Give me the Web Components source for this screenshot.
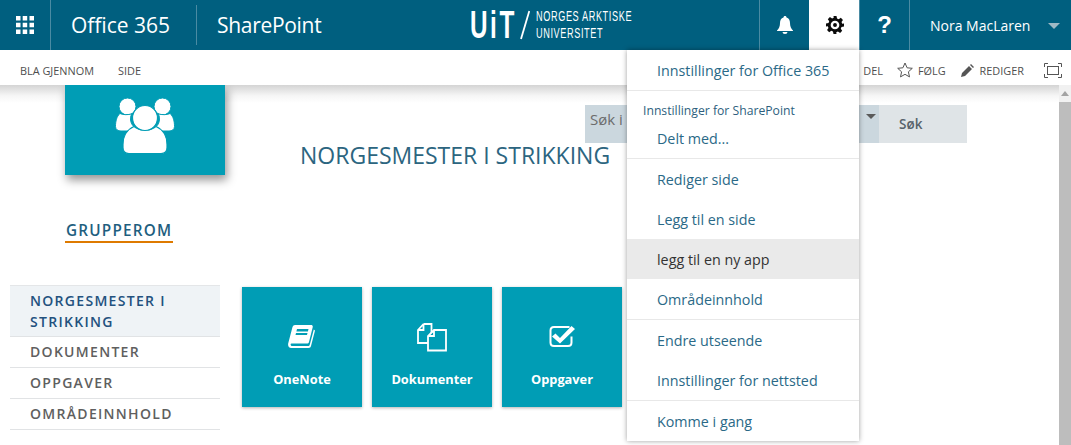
<!DOCTYPE html>
<html lang="nb">
<head>
<meta charset="utf-8">
<title>Norgesmester i strikking</title>
<style>
  html, body { margin: 0; height: 100%; overflow: hidden; background: #fff; }
  body { font-family: "Open Sans", "Noto Sans", sans-serif; }
</style>
</head>
<body>
<sp-app>
  <sp-topbar slot="top"></sp-topbar>
  <sp-ribbon slot="top"></sp-ribbon>
  <sp-hero></sp-hero>
  <sp-content>
    <sp-nav slot="nav">
      <sp-nav-item active>NORGESMESTER I STRIKKING</sp-nav-item>
      <sp-nav-item>DOKUMENTER</sp-nav-item>
      <sp-nav-item>OPPGAVER</sp-nav-item>
      <sp-nav-item>OMRÅDEINNHOLD</sp-nav-item>
    </sp-nav>
    <sp-tile icon="book">OneNote</sp-tile>
    <sp-tile icon="docs">Dokumenter</sp-tile>
    <sp-tile icon="check">Oppgaver</sp-tile>
  </sp-content>
  <sp-menu slot="overlay">
    <sp-menu-item sep>Innstillinger for Office 365</sp-menu-item>
    <sp-menu-head>Innstillinger for SharePoint</sp-menu-head>
    <sp-menu-item sep short>Delt med...</sp-menu-item>
    <sp-menu-item>Rediger side</sp-menu-item>
    <sp-menu-item>Legg til en side</sp-menu-item>
    <sp-menu-item hover>legg til en ny app</sp-menu-item>
    <sp-menu-item sep>Områdeinnhold</sp-menu-item>
    <sp-menu-item>Endre utseende</sp-menu-item>
    <sp-menu-item sep>Innstillinger for nettsted</sp-menu-item>
    <sp-menu-item>Komme i gang</sp-menu-item>
  </sp-menu>
</sp-app>

<script>
// small helper, every element is just a shadow root with html
const define = (name, html) => {
  customElements.define(name, class extends HTMLElement {
    constructor() {
      super();
      this.attachShadow({ mode: 'open' });
      const template = document.createElement('template');
      template.innerHTML = typeof html === 'function' ? html(this) : html;
      this.shadowRoot.appendChild(template.content.cloneNode(true));
    }
  });
};

define('sp-app', `
  <style>
    :host { display: block; position: relative; width: 1071px; height: 445px; overflow: hidden; }
    .top { position: relative; z-index: 2; }
    .below { display: flex; height: 360px; }
    .page { flex: 1; min-width: 0; position: relative; }
    .track { width: 12px; background: #f1f1f1; display: flex; flex-direction: column; }
    .arrow { height: 17px; display: flex; align-items: center; justify-content: center; }
    .arrow i { border: 4px solid transparent; border-top: 0; border-bottom: 5px solid #a3a3a3; }
    .thumb { flex: 1; background: #bdbdbd; }
    .shade { position: absolute; left: 0; right: 12px; top: 85px; height: 18px; background: linear-gradient(#d4d4d4, #f6f6f6 60%, rgba(255,255,255,0)); z-index: 1; }
  </style>
  <div class="top"><slot name="top"></slot></div>
  <div class="shade"></div>
  <div class="below">
    <div class="page"><slot></slot></div>
    <div class="track"><div class="arrow"><i></i></div><div class="thumb"></div></div>
  </div>
  <slot name="overlay"></slot>
`);

define('sp-topbar', `
  <style>
    :host { display: flex; height: 50px; background: #005f7f; color: #fff; font-family: "Open Sans", "Noto Sans", sans-serif; align-items: stretch; }
    .waffle { width: 50px; border-right: 1px solid #4a8ba3; display: flex; align-items: center; justify-content: center; }
    .brand { display: flex; align-items: center; font-size: 21px; padding-left: 20px; }
    .brand span { line-height: 40px; white-space: nowrap; }
    .brand .o365 { width: 104px; border-right: 1px solid #4a8ba3; padding-right: 21px; }
    .brand .sp { padding-left: 20px; letter-spacing: -.3px; }
    .logo { position: absolute; left: 470px; top: 0; height: 50px; display: flex; align-items: center; }
    .spacer { flex: 1; }
    .cell { width: 49px; border-left: 1px solid #4a8ba3; display: flex; align-items: center; justify-content: center; }
    .cell.on { background: #fff; border-left: 1px solid #fff; }
    .user { width: 162px; border-left: 1px solid #4a8ba3; display: flex; align-items: center; font-size: 14px; padding-left: 20px; box-sizing: border-box; white-space: nowrap; }
    .user i { margin-left: 18px; margin-top: 1px; border: 6px solid transparent; border-bottom: 0; border-top: 6px solid #9fb9c5; }
    .q { font: bold 24px "Liberation Sans", sans-serif; }
    .uit { font: bold 38px/1 "Liberation Sans", sans-serif; letter-spacing: 4px; width: 50px; white-space: nowrap; transform: scaleX(.64); transform-origin: left center; }
    .slash { width: 10px; height: 30px; margin-right: 6px; }
    .two { font: 15px/17px "Liberation Sans", sans-serif; letter-spacing: 1px; width: 96px; white-space: nowrap; padding-bottom: 2px; }
    .two div { transform: scaleX(.61); transform-origin: left center; }
  </style>
  <div class="waffle">
    <svg width="18" height="18" viewBox="0 0 18 18" fill="#fff"><path d="M0 0h4.500v4.500H0zM6.700 0h4.500v4.500H6.700zM13.500 0H18v4.500h-4.500zM0 6.700h4.500v4.500H0zM6.700 6.700h4.500v4.500H6.700zM13.500 6.700H18v4.500h-4.500zM0 13.500h4.500V18H0zM6.700 13.500h4.500V18H6.700zM13.500 13.500H18V18h-4.500z"/></svg>
  </div>
  <div class="brand"><span class="o365">Office 365</span><span class="sp">SharePoint</span></div>
  <div class="logo">
    <div class="uit">UiT</div>
    <svg class="slash" viewBox="0 0 10 30"><path d="M9.300 1 L1 29" stroke="#fff" stroke-width="1.800" fill="none"/></svg>
    <div class="two"><div>NORGES ARKTISKE</div><div>UNIVERSITET</div></div>
  </div>
  <div class="spacer"></div>
  <div class="cell">
    <svg width="16" height="18" viewBox="0 0 16 18" fill="#fff"><path d="M8 0c1 0 1.500.7 1.500 1.500C12 2.200 13 4.500 13 7c0 3.500 1 5.500 3 7.500V15H0v-.5C2 12.500 3 10.500 3 7c0-2.500 1-4.800 3.500-5.500C6.500.7 7 0 8 0zM5.500 16h5a2.500 2 0 0 1-5 0z"/></svg>
  </div>
  <div class="cell on">
    <svg width="18" height="18" viewBox="0 0 24 24"><path fill="#0b0b0b" fill-rule="evenodd" d="M10 0h4l.7 3.400 2.200.9L19.800 2.400l2.800 2.800-1.900 2.900.9 2.200L24 10v4l-3.400.7-.9 2.200 1.900 2.900-2.800 2.800-2.900-1.900-2.200.9L14 24h-4l-.7-3.400-2.200-.9-2.900 1.900-2.800-2.800 1.900-2.900-.9-2.200L0 14v-4l3.400-.7.900-2.200-1.900-2.900 2.800-2.800 2.900 1.900 2.200-.9zM12 6.200a5.800 5.800 0 1 0 0 11.600 5.800 5.800 0 0 0 0-11.600zm0 3.200a2.600 2.600 0 1 1 0 5.200 2.600 2.600 0 0 1 0-5.200z"/></svg>
  </div>
  <div class="cell"><span class="q">?</span></div>
  <div class="user">Nora MacLaren<i></i></div>
`);

define('sp-ribbon', `
  <style>
    :host { display: flex; height: 35px; box-sizing: border-box; padding: 5px 0 0 20px; align-items: center; background: #fff; font: 400 10.900px "Open Sans", "Noto Sans", sans-serif; color: #4f4f4f; position: relative; }
    .left { display: flex; gap: 24px; }
    .right { margin-left: auto; display: flex; align-items: center; }
    .right span { white-space: nowrap; }
    svg { display: block; }
  </style>
  <div class="left"><span>BLA GJENNOM</span><span>SIDE</span></div>
  <div class="right">
    <span style="margin-right:14px">DEL</span>
    <svg width="16" height="16" viewBox="0 0 16 16" style="margin-right:5px"><path d="M8 1l2.100 4.800 5.200.5-3.900 3.500 1.100 5.100L8 12.300l-4.500 2.600 1.100-5.100L.7 6.300l5.200-.5z" fill="none" stroke="#555" stroke-width="1"/></svg>
    <span style="margin-right:15px">FØLG</span>
    <svg width="13" height="13" viewBox="0 0 13 13" style="margin-right:6px"><path d="M0 13l1-4 7-7 3 3-7 7zM9 1l1-1 3 3-1 1z" fill="#555"/></svg>
    <span style="margin-right:20px">REDIGER</span>
    <svg width="18" height="15" viewBox="0 0 18 15" style="margin-right:9px" fill="none" stroke="#555"><path d="M.5 4V.5H4M14 .5h3.500V4M17.500 11v3.500H14M4 14.500H.5V11"/><rect x="3.500" y="3.500" width="11" height="8"/></svg>
  </div>
`);

define('sp-hero', `
  <style>
    :host { display: flex; height: 200px; }
    .left { width: 300px; padding-left: 65px; box-sizing: border-box; }
    .tile { width: 160px; height: 90px; background: #009db5; box-shadow: 2px 5px 9px rgba(0,0,0,.42); display: flex; justify-content: center; padding-top: 13px; box-sizing: border-box; position: relative; z-index: 1; }
    .label { display: inline-block; margin-top: 45px; font: 600 15.300px/20px "Open Sans", sans-serif; letter-spacing: 1.200px; color: #1f5f80; padding: 0 1px 1px 1px; border-bottom: 2px solid #de7a00; }
    .right { padding-top: 20px; flex: 1; }
    .search { margin-left: 285px; width: 382px; height: 38px; display: flex; }
    .input { width: 294px; background: #cbd7de; position: relative; font: 15px/24px "Open Sans", sans-serif; color: #6c6c6c; padding: 2px 0 0 5px; box-sizing: border-box; overflow: hidden; white-space: nowrap; }
    .input i { position: absolute; right: 3px; top: 9px; border: 5px solid transparent; border-bottom: 0; border-top: 5px solid #5a5a5a; }
    .btn { flex: 1; background: #dfe4e7; font: 600 13.500px/38px "Open Sans", sans-serif; color: #57626b; padding-left: 20px; }
    h1 { margin: 0; font: 400 23px/24px "Open Sans", sans-serif; color: #2c6580; white-space: nowrap; }
  </style>
  <div class="left">
    <div class="tile">
      <svg width="60" height="56" viewBox="0 0 60 56" fill="#fff" stroke="#009db5" stroke-width="1">
        <circle cx="12.500" cy="8.500" r="8.500"/>
        <circle cx="47.500" cy="8.500" r="8.500"/>
        <path d="M5 15.500c3 1.500 8 1.500 12 .3-1 1.500-1.500 3-1.500 5 0 3.500 1.500 7 4.500 8.500-3 1-5 3.500-6 3.700H6c-3 0-5.500-1.500-5.500-4.500 0-5 1-10 4.500-13z"/>
        <path d="M55 15.500c-3 1.500-8 1.500-12 .3 1 1.500 1.500 3 1.500 5 0 3.500-1.500 7-4.500 8.500 3 1 5 3.500 6 3.700h8c3 0 5.500-1.500 5.500-4.500 0-5-1-10-4.500-13z"/>
        <path d="M19 28.500c3 2.500 7 3.500 11 3.500s8-1 11-3.500c7 3 11 10 11 18v3c0 4-2 6-6 6H14c-4 0-6-2-6-6v-3c0-8 4-15 11-18z" stroke-width="1.200"/>
        <circle cx="30" cy="20" r="12.500" stroke-width="1.200"/>
      </svg>
    </div>
    <div class="label">GRUPPEROM</div>
  </div>
  <div class="right">
    <div class="search">
      <div class="input">Søk i<i></i></div>
      <div class="btn">Søk</div>
    </div>
    <h1>NORGESMESTER I STRIKKING</h1>
  </div>
`);

define('sp-content', `
  <style>
    :host { display: flex; padding-left: 10px; gap: 10px; align-items: flex-start; }
    .nav { width: 210px; margin-right: 12px; }
    .tiles { display: flex; gap: 10px; padding-top: 2px; }
  </style>
  <div class="nav"><slot name="nav"></slot></div>
  <div class="tiles"><slot></slot></div>
`);

define('sp-nav', `<style>:host { display: block; border-top: 1px solid #e4e6e8; }</style><slot></slot>`);

define('sp-nav-item', el => `
  <style>
    :host { display: block; border-bottom: 1px solid #e1e3e5; padding: ${el.hasAttribute('active') ? '4px 20px 4px' : '4px 20px 5px'}; font: 600 14px/21px "Open Sans", sans-serif; letter-spacing: 1.300px; color: ${el.hasAttribute('active') ? '#23517e' : '#5f5f5f'}; background: ${el.hasAttribute('active') ? '#eff3f6' : 'transparent'}; }
  </style>
  <slot></slot>
`);

const tileIcons = {
  book: `<svg width="28" height="24" viewBox="0 0 28 24" fill="#fff"><path fill-rule="evenodd" d="M7 0h16c1.500 0 2 1 1.700 2.200L21 17c-.3 1-1 1.500-2 1.500H3.500c-1.500 0-1 2.500.7 2.500H20c1 0 1.500-.5 1.800-1.500l4-15 1.200 1-4 15.500c-.3 1-1 2-2.500 2H4C1 23.500-.5 21 .3 18L4.500 2C5 .7 5.700 0 7 0zm2 4l-.6 2.500h11.500L20.500 4zm-1 4l-.5 2h11.500l.5-2z"/></svg>`,
  docs: `<svg width="30" height="29" viewBox="0 0 30 29" fill="none" stroke="#fff" stroke-width="1.800"><path d="M6.500 1h8v9M6.500 1L1 7v13h10M6.500 1v6H1"/><path d="M17 7h12v20.500H11V13l6-6zM17 7v6h-6"/></svg>`,
  check: `<svg width="27" height="24" viewBox="0 1.500 27 24" fill="none"><path d="M20.500 3.500H5C3 3.500 1.500 5 1.500 7v12c0 2 1.500 3.500 3.500 3.500h14c2 0 3.500-1.500 3.500-3.500v-6" stroke="#fff" stroke-width="2"/><path d="M6.500 10l4.500 4.500L22.500 2.500l3.500 3L11 20l-8-7z" fill="#fff"/></svg>`
};

define('sp-tile', el => `
  <style>
    :host { display: flex; flex-direction: column; align-items: center; width: 120px; height: 120px; background: #009db5; box-shadow: 0 1px 3px rgba(0,0,0,.3); color: #fff; font: 700 12.800px/18px "Open Sans", sans-serif; }
    .ico { height: 38px; margin-top: 31px; display: flex; align-items: center; }
    .txt { margin-top: 14px; }
  </style>
  <div class="ico">${tileIcons[el.getAttribute('icon')]}</div>
  <div class="txt"><slot></slot></div>
`);

define('sp-menu', `
  <style>
    :host { display: block; position: absolute; left: 627px; top: 50px; width: 232px; background: #fff; box-shadow: 0 0 5px rgba(0,0,0,.38); z-index: 3; }
  </style>
  <slot></slot>
`);

define('sp-menu-head', `
  <style>
    :host { display: block; height: 28px; padding: 11px 0 0 16px; box-sizing: border-box; font: 12.200px/18px "Open Sans", "Noto Sans", sans-serif; color: #2e5f7e; white-space: nowrap; }
  </style>
  <slot></slot>
`);

define('sp-menu-item', el => `
  <style>
    :host { display: block; box-sizing: content-box; height: ${el.hasAttribute('short') ? 38 : 39}px; padding-top: 1px; line-height: ${el.hasAttribute('short') ? 38 : 39}px; padding-left: 30px; font-family: "Open Sans", "Noto Sans", sans-serif; font-size: 14.300px; white-space: nowrap; color: ${el.hasAttribute('hover') ? '#333' : '#2a6987'}; background: ${el.hasAttribute('hover') ? '#eaeaea' : 'transparent'}; ${el.hasAttribute('sep') ? 'border-bottom: 1px solid #e8e8e8;' : ''} }
  </style>
  <slot></slot>
`);
</script>
</body>
</html>
